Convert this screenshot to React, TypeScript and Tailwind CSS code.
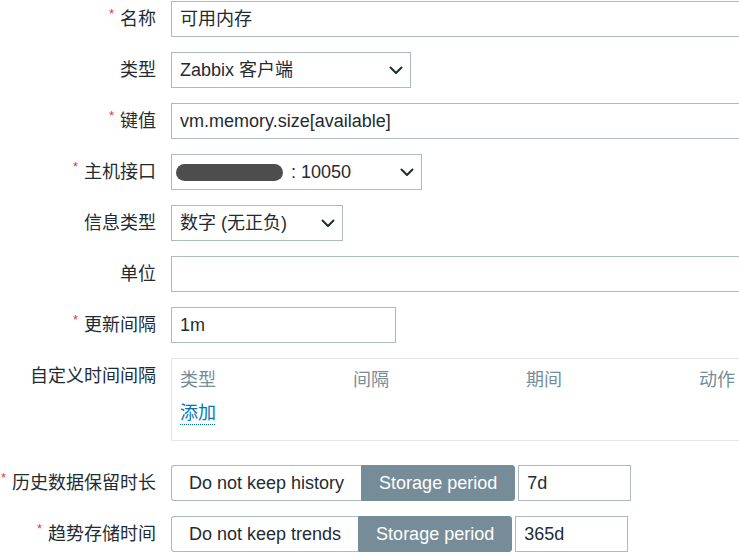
import React from "react";

const font = { fontFamily: '"Liberation Sans", Arial, "Noto Sans CJK SC", sans-serif' };

function Label({ text, req }: { text: string; req?: boolean }) {
  return (
    <div className="h-[36px] flex items-center justify-end whitespace-nowrap text-[18px] text-[#1f2c33]">
      {req && <span className="text-[#e33734] text-[13px] mr-[6px] relative -top-[5px]">*</span>}
      <span>{text}</span>
    </div>
  );
}

function Chevron() {
  return (
    <svg width="14" height="9" viewBox="0 0 14 9" className="shrink-0">
      <path d="M1.5 1.5 L7 7 L12.5 1.5" fill="none" stroke="#1f2c33" strokeWidth="2" strokeLinecap="round" strokeLinejoin="round" />
    </svg>
  );
}

function Input({ value, w }: { value: string; w: string }) {
  return (
    <div className={`h-[36px] ${w} border border-[#acbbc2] bg-white flex items-center pl-[8px] text-[18px] text-[#1f2c33] whitespace-nowrap shrink-0`}>
      {value}
    </div>
  );
}

function Select({ children, w }: { children: React.ReactNode; w: string }) {
  return (
    <div className={`h-[36px] ${w} border border-[#acbbc2] bg-white flex items-center justify-between pl-[8px] pr-[7px] text-[18px] text-[#1f2c33] whitespace-nowrap`}>
      <div className="flex items-center">{children}</div>
      <Chevron />
    </div>
  );
}

function Segmented({ first, input }: { first: string; input: string }) {
  return (
    <div className="flex items-center h-[36px]">
      <div className="h-[36px] flex items-center px-[17px] border border-[#acbbc2] border-r-0 rounded-l-[3px] bg-white text-[18px] text-[#1f2c33] whitespace-nowrap">
        {first}
      </div>
      <div className="h-[36px] flex items-center px-[17px] border border-[#768d99] rounded-r-[3px] bg-[#768d99] text-[18px] text-white whitespace-nowrap">
        Storage period
      </div>
      <div className="ml-[3px]">
        <Input value={input} w="w-[113px]" />
      </div>
    </div>
  );
}

export default function App() {
  return (
    <div style={font} className="w-[739px] h-[555px] overflow-hidden bg-white pt-[1px]">
      <div className="grid grid-cols-[156px_800px] gap-x-[15px] gap-y-[15px]">
        <Label text="名称" req />
        <Input value="可用内存" w="w-[700px]" />

        <Label text="类型" />
        <Select w="w-[240px]">Zabbix 客户端</Select>

        <Label text="键值" req />
        <Input value="vm.memory.size[available]" w="w-[700px]" />

        <Label text="主机接口" req />
        <Select w="w-[251px]">
          <span className="inline-block w-[107px] h-[17px] rounded-full bg-[#4d4d4d] -ml-[4px] mr-[8px]" />
          <span>: 10050</span>
        </Select>

        <Label text="信息类型" />
        <Select w="w-[172px]">数字 (无正负)</Select>

        <Label text="单位" />
        <Input value="" w="w-[700px]" />

        <Label text="更新间隔" req />
        <Input value="1m" w="w-[225px]" />

        <Label text="自定义时间间隔" />
        <div className="pb-[9px]">
          <div className="w-[700px] h-[83px] border border-[#e3e7ea] pl-[8px] pt-[10px]">
            <div className="grid grid-cols-[173px_173px_173px_173px] text-[18px] leading-[22px] text-[#768d99]">
              <span>类型</span>
              <span>间隔</span>
              <span>期间</span>
              <span>动作</span>
            </div>
            <div className="mt-[11px] text-[18px] leading-[22px]">
              <span className="text-[#0275b8] underline decoration-dotted decoration-1 underline-offset-[5px]">添加</span>
            </div>
          </div>
        </div>

        <Label text="历史数据保留时长" req />
        <Segmented first="Do not keep history" input="7d" />

        <Label text="趋势存储时间" req />
        <Segmented first="Do not keep trends" input="365d" />
      </div>
    </div>
  );
}
